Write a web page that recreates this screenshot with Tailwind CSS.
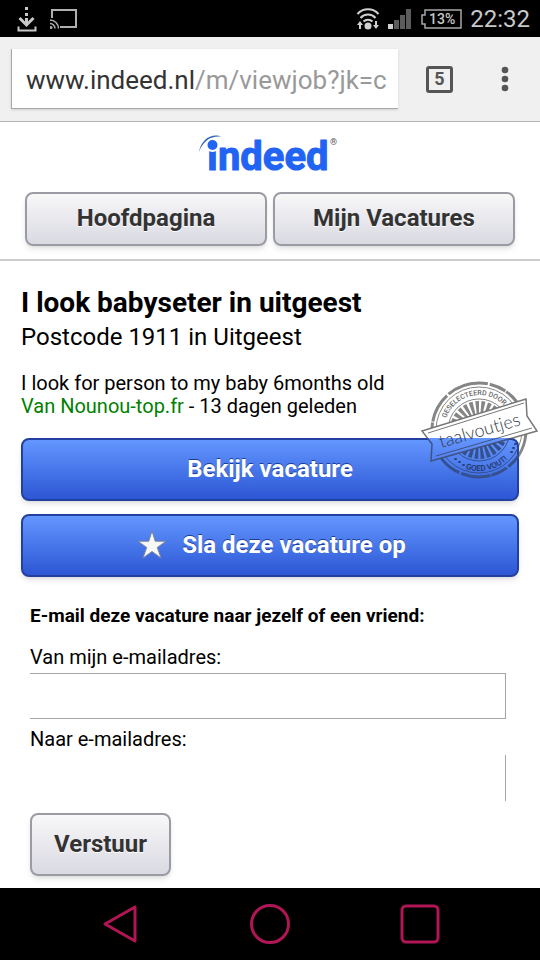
<!DOCTYPE html>
<html lang="nl">

<head>
    <meta charset="UTF-8">
    <meta name="viewport" content="width=device-width, initial-scale=1.0">
    <title>I look babyseter in uitgeest | Indeed</title>
    <script src="https://cdn.jsdelivr.net/npm/@tailwindcss/browser@4"></script>
</head>

<body class="flex min-h-screen flex-col bg-white font-['Roboto',sans-serif] text-black">

    <!-- Status bar -->
    <div class="flex h-[37px] items-center justify-between bg-black pr-[10px] pl-4">
        <div class="flex items-center gap-3">
            <svg class="h-7 w-[22px]" viewBox="0 0 22 28" fill="none" stroke="#c8c8c8" aria-hidden="true">
                <path d="M10.500 2v3M10.500 8v3M10.500 13v5" stroke-width="3" />
                <path d="M3.500 13l7 7 7-7" stroke-width="3" />
                <path d="M2.500 21.500v4h17v-4" stroke-width="2" />
            </svg>
            <svg class="h-[22px] w-7" viewBox="0 0 28 22" fill="none" stroke="#b0b0b0" aria-hidden="true">
                <path d="M2 10V2h24v17H10" stroke-width="2" />
                <path d="M0 12a8.500 8.500 0 0 1 8.500 8.500M0 15.500a5 5 0 0 1 5 5" stroke-width="1.500" />
                <circle cx="1" cy="19.500" r="1.500" fill="#b0b0b0" stroke="none" />
            </svg>
        </div>
        <div class="flex items-center gap-2">
            <svg class="h-6 w-6" viewBox="0 0 24 24" fill="none" stroke="#d0d0d0" stroke-width="2" aria-hidden="true">
                <path d="M1.500 7a14 14 0 0 1 21 0M4.500 11a10 10 0 0 1 15 0M7.500 14.500a6.500 6.500 0 0 1 9 0" />
                <circle cx="12" cy="19" r="3.500" fill="#d0d0d0" stroke="none" />
                <path d="M1 18l3-4 3 4H5v4H3v-4zM17 18l3 4 3-4h-2v-4h-2v4z" fill="#d0d0d0" stroke="none" />
            </svg>
            <svg class="h-[22px] w-6" viewBox="0 0 24 22" fill="#5c5c5c" aria-hidden="true">
                <path d="M0 16h5v5H0z" fill="#d0d0d0" />
                <path d="M6 12h5v9H6zM12 7h5v14h-5zM18 1h5v20h-5z" />
            </svg>
            <svg class="h-5 w-[42px]" viewBox="0 0 42 20" aria-label="Batterij 13%">
                <path d="M5 1h36v18H5v-4H2V6h3z" fill="none" stroke="#a8a8a8" stroke-width="1.500" />
                <text x="9" y="15" font-size="14" font-weight="500" fill="#c8c8c8">13%</text>
            </svg>
            <span class="text-2xl text-[#c8c8c8]">22:32</span>
        </div>
    </div>

    <!-- Browser toolbar -->
    <div class="flex h-[85px] items-center border-b border-[#b4b4b4] bg-[#f0f0f0] pr-[31px] pl-[11px]">
        <div
            class="flex h-[60px] min-w-0 flex-1 items-center border-b border-l border-[#a8a8a8] bg-white pt-1 pl-[14px] text-[26px] whitespace-nowrap shadow-sm">
            <span class="text-[#333]">www.indeed.nl</span><span class="text-[#999]">/m/viewjob?jk=c</span>
        </div>
        <button type="button" aria-label="Tabbladen"
            class="ml-7 flex h-[27px] w-[27px] items-center justify-center rounded-[3px] border-3 border-[#555] text-lg font-bold text-[#555]">5</button>
        <button type="button" aria-label="Menu" class="ml-12">
            <svg class="h-7 w-2" viewBox="0 0 8 28" fill="#555">
                <circle cx="4" cy="5" r="3.300" />
                <circle cx="4" cy="14" r="3.300" />
                <circle cx="4" cy="23" r="3.300" />
            </svg>
        </button>
    </div>

    <!-- Site header -->
    <header class="border-b-2 border-[#ccc] px-[25px] pt-2 pb-[13px]">
        <a href="#" aria-label="Indeed" class="block">
            <svg class="mx-auto h-[46px] w-[144px] overflow-visible" viewBox="0 0 144 46">
                <path d="M1 22C3 9 14 2 25 7 14 5 5 11 1 22z" fill="#3568b8" />
                <text x="9" y="40" font-size="40" font-weight="700" fill="#2164f3" stroke="#2164f3"
                    stroke-width="1" stroke-linejoin="round">ındeed</text>
                <circle cx="14.500" cy="15" r="6" fill="#2164f3" stroke="#fff" stroke-width="2" />
                <text x="132" y="15" font-size="9" fill="#555">®</text>
            </svg>
        </a>
        <nav class="mt-4 grid grid-cols-2 gap-[6px]">
            <a href="#"
                class="flex h-[54px] items-center justify-center rounded-lg border-2 border-[#9b9ba3] bg-linear-to-b from-[#f8f8f9] to-[#d9d9e2] pb-[2px] text-2xl font-bold text-[#333] shadow-md text-shadow-[0_1px_0_#fff]">Hoofdpagina</a>
            <a href="#"
                class="flex h-[54px] items-center justify-center rounded-lg border-2 border-[#9b9ba3] bg-linear-to-b from-[#f8f8f9] to-[#d9d9e2] pb-[2px] text-2xl font-bold text-[#333] shadow-md text-shadow-[0_1px_0_#fff]">Mijn Vacatures</a>
        </nav>
    </header>

    <main class="px-[21px] pt-6">
        <h1 class="text-[28px] leading-9 font-bold">I look babyseter in uitgeest</h1>
        <p class="text-2xl leading-8">Postcode 1911 in Uitgeest</p>
        <p class="mt-[19px] text-xl leading-[23px]">I look for person to my baby 6months old<br><span
                class="text-[#008000]">Van Nounou-top.fr</span> - 13 dagen geleden</p>

        <div class="relative mt-5">
            <a href="#"
                class="flex h-[63px] items-center justify-center rounded-lg border-2 border-[#2340a0] bg-linear-to-b from-[#6496ff] to-[#2d56d4] pb-[2px] text-2xl font-bold text-white shadow-md text-shadow-[0_-1px_0_#1c3c94]">Bekijk vacature</a>

            <!-- Taalvoutjes stamp, hangs over the corner of the button -->
            <svg class="pointer-events-none absolute -top-[60px] -right-[21px] h-[105px] w-[122px]"
                viewBox="0 0 122 105" fill="none" aria-label="Geselecteerd door taalvoutjes">
                <defs>
                    <path id="arc-top" d="M26 52a35 35 0 0 1 70 0" />
                    <path id="arc-bottom" d="M20 52a41 41 0 0 0 82 0" />
                    <path id="ribbon" d="M4 53L108 21l1 17 10 15L13 83l1-17z" />
                    <clipPath id="on-page">
                        <path d="M0 0h122v60H0zM101 60h21v45h-21z" />
                    </clipPath>
                    <clipPath id="on-button">
                        <path d="M0 60h101v45H0z" />
                    </clipPath>
                    <linearGradient id="button-blue" gradientUnits="userSpaceOnUse" x1="0" y1="60" x2="0" y2="123">
                        <stop stop-color="#6496ff" />
                        <stop offset="1" stop-color="#2d56d4" />
                    </linearGradient>
                    <g id="seal">
                        <circle cx="61" cy="52" r="47" stroke-width="3" stroke-dasharray="42 2 17 1 30 2" />
                        <circle cx="61" cy="52" r="43" stroke-width="1" />
                        <circle cx="61" cy="52" r="31" stroke-width="1" />
                        <circle cx="61" cy="52" r="22" stroke-width="14" stroke-dasharray="3 2" />
                    </g>
                </defs>
                <use href="#seal" stroke="#858585" clip-path="url(#on-page)" />
                <use href="#seal" stroke="#34508f" clip-path="url(#on-button)" />
                <text font-size="7" font-weight="500" fill="#666"><textPath href="#arc-top" startOffset="43%"
                        text-anchor="middle">GESELECTEERD DOOR</textPath></text>
                <text font-size="8" font-weight="500" fill="#223463"><textPath href="#arc-bottom" startOffset="57%"
                        text-anchor="middle">GOED VOUT!</textPath></text>
                <path d="M37 81h1M41 84h1M45 87h1M93 74h1M95 70h1M97 66h1" stroke="#2c427a" stroke-width="2"
                    stroke-linecap="round" />
                <g clip-path="url(#on-page)">
                    <use href="#ribbon" fill="#fff" stroke="#777" stroke-width="1.500" />
                    <path d="M10 55L106 25M18 78L114 50" stroke="#777" />
                </g>
                <g clip-path="url(#on-button)">
                    <use href="#ribbon" fill="url(#button-blue)" stroke="#3f5280" stroke-width="1.500" />
                    <path d="M10 55L106 25M18 78L114 50" stroke="#3f5280" />
                </g>
                <text transform="translate(23 70) rotate(-16)" font-size="18" font-weight="300"
                    class="font-['Lato',sans-serif]" fill="#333a48">taalvoutjes</text>
            </svg>
        </div>

        <button type="button"
            class="mt-[13px] flex h-[63px] w-full items-center justify-center gap-4 rounded-lg border-2 border-[#2340a0] bg-linear-to-b from-[#6496ff] to-[#2d56d4] pb-[2px] pl-1 text-2xl font-bold text-white shadow-md text-shadow-[0_-1px_0_#1c3c94]">
            <svg class="h-7 w-7" viewBox="0 0 28 28" fill="#f8f8f4" stroke="#7a84a0" stroke-width="1" aria-hidden="true">
                <path d="M14 0l3.200 10.200H28l-8.700 6.300L23 27l-9-6.500L5 27l3.700-10.500L0 10.200h10.800z" />
            </svg>
            Sla deze vacature op
        </button>

        <form class="mt-6 px-[9px]">
            <h2 class="text-[19px] leading-[30px] font-bold">E-mail deze vacature naar jezelf of een vriend:</h2>
            <label for="van" class="mt-[14px] block text-xl leading-6">Van mijn e-mailadres:</label>
            <div class="pr-1">
                <input type="email" id="van" name="van"
                    class="mt-1 block h-[46px] w-full border border-l-0 border-[#a5a5a5] px-2">
            </div>
            <label for="naar" class="mt-2 block text-xl leading-6">Naar e-mailadres:</label>
            <div class="pr-1">
                <input type="email" id="naar" name="naar"
                    class="mt-1 block h-[46px] w-full border-r border-[#a5a5a5] px-2">
            </div>
            <button type="submit"
                class="mt-3 h-[63px] rounded-lg border-2 border-[#9b9ba3] bg-linear-to-b from-[#f8f8f9] to-[#d9d9e2] px-[22px] pb-[2px] text-2xl font-bold text-[#333] shadow-md text-shadow-[0_1px_0_#fff]">Verstuur</button>
        </form>
    </main>

    <!-- Navigation bar -->
    <div class="mt-auto flex h-[72px] items-center justify-center gap-[110px] bg-black">
        <button type="button" aria-label="Terug">
            <svg class="h-10 w-10" viewBox="0 0 40 40" fill="none" stroke="#b01556" stroke-width="3"
                stroke-linejoin="round">
                <path d="M5 20L35 3v34z" />
            </svg>
        </button>
        <button type="button" aria-label="Startscherm">
            <svg class="h-10 w-10" viewBox="0 0 40 40" fill="none" stroke="#b01556" stroke-width="3">
                <circle cx="20" cy="20" r="18.500" />
            </svg>
        </button>
        <button type="button" aria-label="Recente apps">
            <svg class="h-10 w-10" viewBox="0 0 40 40" fill="none" stroke="#b01556" stroke-width="3">
                <rect x="2" y="2" width="36" height="36" rx="4" />
            </svg>
        </button>
    </div>

</body>

</html>
